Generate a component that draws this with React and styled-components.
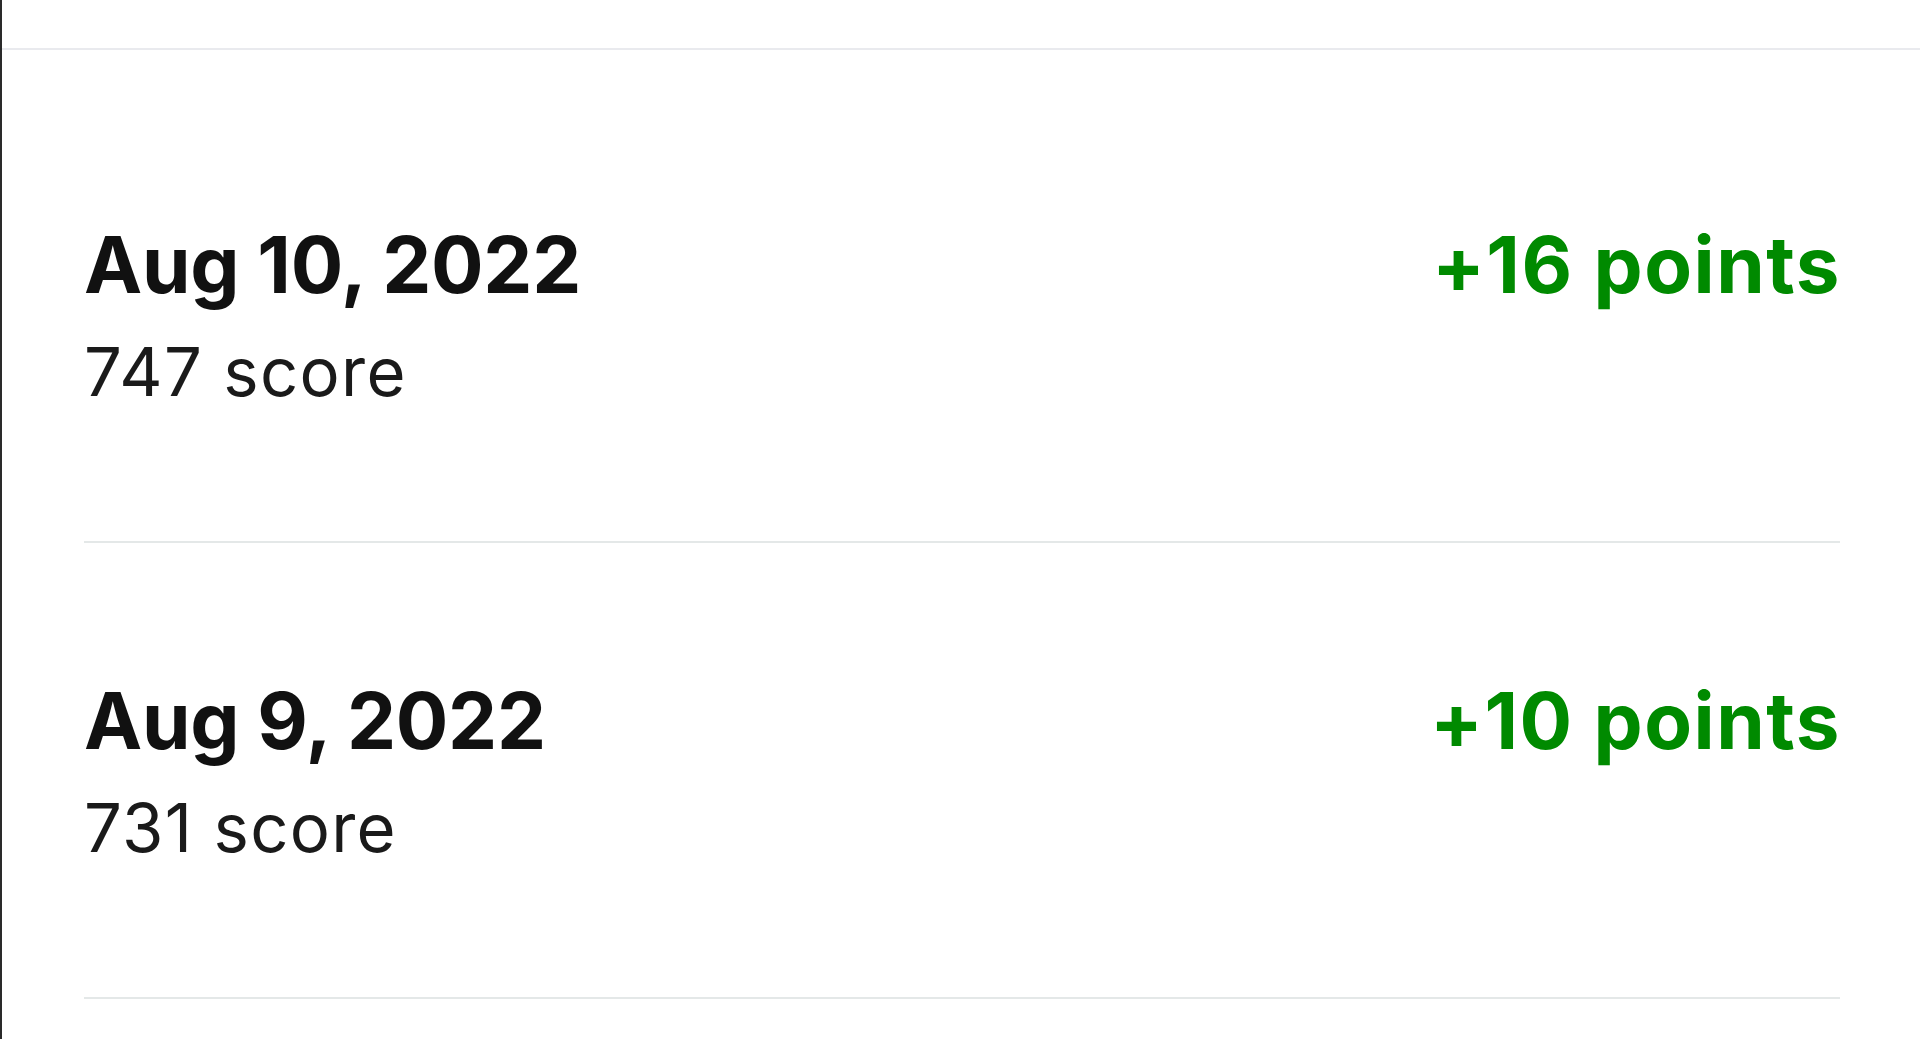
import React from "react";
import styled, { createGlobalStyle } from "styled-components";

const GlobalStyle = createGlobalStyle`
  html, body {
    margin: 0;
    padding: 0;
    background: #ffffff;
  }
  body {
    font-family: Inter, "Liberation Sans", Arial, sans-serif;
    -webkit-font-smoothing: antialiased;
  }
`;

const Page = styled.div`
  min-height: 100vh;
  box-sizing: border-box;
  border-left: 2px solid #2a2a2a;
  background: #ffffff;
`;

const TopBar = styled.div`
  height: 48px;
  border-bottom: 2px solid #e9eaee;
`;

const List = styled.ul`
  list-style: none;
  margin: 0;
  padding: 37px 80px 0 82px;
`;

const Row = styled.li`
  display: flex;
  justify-content: space-between;
  align-items: flex-start;
  padding: 139px 0 136px;
  border-bottom: 2px solid #e4e8e8;
`;

const Info = styled.div`
  display: flex;
  flex-direction: column;
`;

const DateText = styled.div`
  font-size: 78px;
  line-height: 78px;
  font-weight: 700;
  color: #111111;
  letter-spacing: -0.3px;
`;

const Score = styled.div`
  margin-top: 34px;
  font-size: 67px;
  line-height: 67px;
  font-weight: 400;
  color: #1a1a1a;
  letter-spacing: 1.3px;
`;

const Change = styled.div`
  font-size: 78px;
  line-height: 78px;
  font-weight: 700;
  color: #008a00;
  letter-spacing: 1.5px;
  margin-right: -1px;
`;

const entries = [
  { date: "Aug 10, 2022", score: 747, change: 16 },
  { date: "Aug 9, 2022", score: 731, change: 10 },
];

export default function App() {
  return (
    <>
      <GlobalStyle />
      <Page>
        <TopBar />
        <List>
          {entries.map((e) => (
            <Row key={e.date}>
              <Info>
                <DateText>{e.date}</DateText>
                <Score>{e.score} score</Score>
              </Info>
              <Change>+{e.change} points</Change>
            </Row>
          ))}
        </List>
      </Page>
    </>
  );
}
